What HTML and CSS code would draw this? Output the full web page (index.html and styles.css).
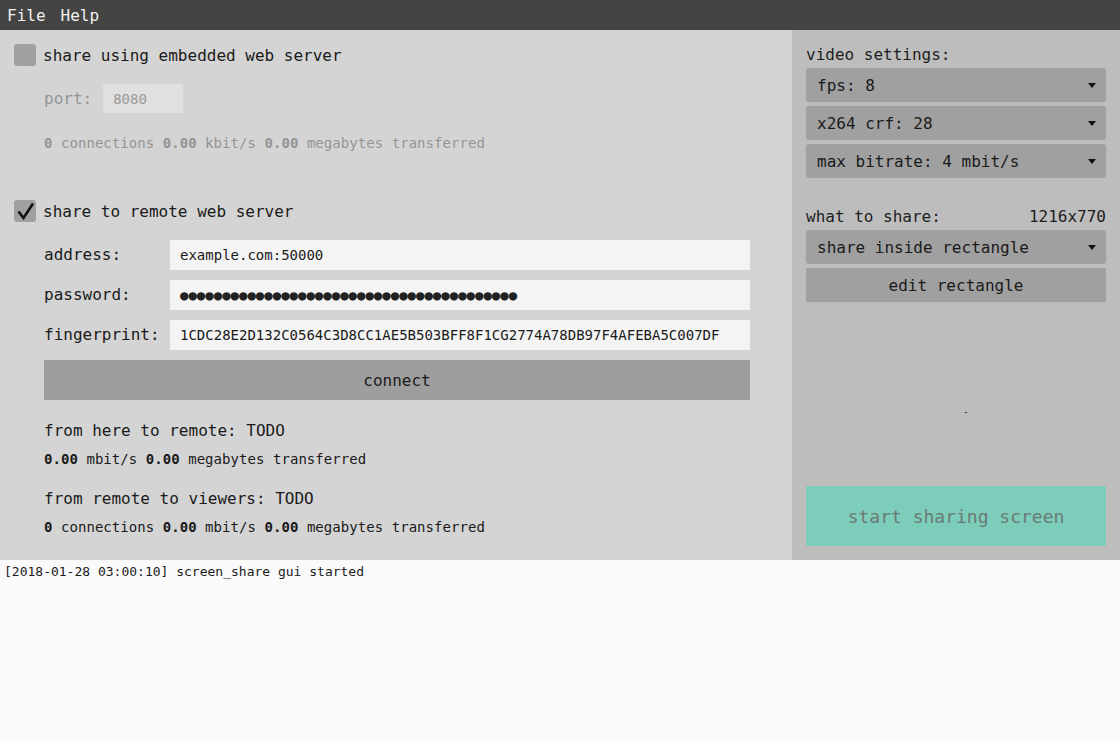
FILE: index.html
```html
<!DOCTYPE html>
<html>
<head>
<meta charset="utf-8">
<link rel="stylesheet" href="styles.css">
</head>
<body>
<div class="menubar">
  <span class="menu-item">File</span>
  <span class="menu-item">Help</span>
</div>
<div class="main">
  <div class="left">
    <div class="check-row">
      <span class="checkbox"></span>
      <span class="check-label">share using embedded web server</span>
    </div>
    <div class="sub">
      <div class="port-row">
        <span class="muted">port:</span>
        <span class="port-input">8080</span>
      </div>
      <div class="stats muted stats-embedded"><b>0</b> connections <b>0.00</b> kbit/s <b>0.00</b> megabytes transferred</div>
    </div>

    <div class="check-row check-remote">
      <span class="checkbox">
        <svg width="22" height="22" viewBox="0 0 22 22"><path d="M4.5 11.5 L9.5 18 L19 3.5" fill="none" stroke="#111" stroke-width="2.6" stroke-linejoin="miter"/></svg>
      </span>
      <span class="check-label">share to remote web server</span>
    </div>
    <div class="sub">
      <div class="field-row first">
        <span class="field-label">address:</span>
        <span class="field-input">example.com:50000</span>
      </div>
      <div class="field-row">
        <span class="field-label">password:</span>
        <span class="field-input dots">●●●●●●●●●●●●●●●●●●●●●●●●●●●●●●●●●●●●●●●●</span>
      </div>
      <div class="field-row">
        <span class="field-label">fingerprint:</span>
        <span class="field-input">1CDC28E2D132C0564C3D8CC1AE5B503BFF8F1CG2774A78DB97F4AFEBA5C007DF</span>
      </div>
      <div class="connect">connect</div>
      <div class="heading first-heading">from here to remote: TODO</div>
      <div class="stats"><b>0.00</b> mbit/s <b>0.00</b> megabytes transferred</div>
      <div class="heading second-heading">from remote to viewers: TODO</div>
      <div class="stats"><b>0</b> connections <b>0.00</b> mbit/s <b>0.00</b> megabytes transferred</div>
    </div>
  </div>
  <div class="right">
    <div class="section-label">video settings:</div>
    <div class="dropdown first-dd"><span>fps: 8</span><span class="caret"></span></div>
    <div class="dropdown"><span>x264 crf: 28</span><span class="caret"></span></div>
    <div class="dropdown"><span>max bitrate: 4 mbit/s</span><span class="caret"></span></div>
    <div class="section-label share-label"><span>what to share:</span><span>1216x770</span></div>
    <div class="dropdown first-dd"><span>share inside rectangle</span><span class="caret"></span></div>
    <div class="button-plain">edit rectangle</div>
    <div class="dot-wrap"><span class="dot"></span></div>
    <div class="start">start sharing screen</div>
  </div>
</div>
<div class="log">[2018-01-28 03:00:10] screen_share gui started</div>
</body>
</html>
```
FILE: styles.css
```css
html, body {
  margin: 0;
  padding: 0;
}
body {
  width: 1120px;
  height: 740px;
  overflow: hidden;
  font-family: "DejaVu Sans Mono", "Liberation Mono", monospace;
  color: #1a1a1a;
  background: #fafafa;
}
.menubar {
  height: 30px;
  background: #444444;
  display: flex;
  align-items: center;
  padding: 2px 0 0 7px;
  gap: 15px;
  box-sizing: border-box;
}
.menu-item {
  color: #f0f0f0;
  font-size: 16px;
  line-height: 28px;
}
.main {
  display: flex;
  height: 530px;
}
.left {
  width: 792px;
  background: #d4d4d4;
  padding: 14px 0 0 14px;
  box-sizing: border-box;
}
.check-row {
  display: flex;
  align-items: center;
  height: 22px;
  gap: 7px;
}
.check-remote {
  margin-top: 47px;
}
.checkbox {
  width: 22px;
  height: 22px;
  border-radius: 3px;
  background: #a0a0a0;
  display: block;
}
.checkbox svg {
  display: block;
}
.check-label {
  font-size: 16px;
  line-height: 22px;
  padding-top: 2px;
}
.sub {
  padding-left: 30px;
  width: 706px;
}
.muted {
  color: #959595;
}
.port-row {
  margin-top: 18px;
  display: flex;
  align-items: center;
  height: 29px;
  font-size: 16px;
}
.port-input {
  margin-left: 11px;
  width: 80px;
  height: 29px;
  line-height: 30px;
  background: #e0e0e0;
  color: #9a9a9a;
  font-size: 14px;
  padding-left: 10px;
  box-sizing: border-box;
}
.stats {
  font-size: 14px;
  line-height: 20px;
  letter-spacing: 0.05px;
  margin-top: 9px;
}
.stats-embedded {
  margin-top: 20px;
}
.field-row {
  display: flex;
  align-items: center;
  height: 30px;
  margin-top: 10px;
}
.field-row.first {
  margin-top: 18px;
}
.field-label {
  width: 126px;
  font-size: 16px;
  padding-bottom: 2px;
}
.field-input {
  flex: 1;
  height: 30px;
  line-height: 30px;
  background: #f4f4f4;
  font-size: 14px;
  padding-left: 10px;
  white-space: nowrap;
  overflow: hidden;
}
.dots {
  color: #222;
}
.connect {
  margin-top: 10px;
  height: 40px;
  line-height: 42px;
  overflow: hidden;
  background: #9e9e9e;
  text-align: center;
  font-size: 16px;
}
.heading {
  font-size: 16px;
  line-height: 19px;
  padding-top: 2px;
}
.first-heading {
  margin-top: 19px;
}
.second-heading {
  margin-top: 18px;
}
.right {
  flex: 1;
  background: #bdbdbd;
  padding: 15px 14px 14px 14px;
  display: flex;
  flex-direction: column;
}
.section-label {
  font-size: 16px;
  line-height: 20px;
  color: #1e1e1e;
}
.share-label {
  margin-top: 29px;
  display: flex;
  justify-content: space-between;
}
.dropdown {
  height: 34px;
  background: #a0a0a0;
  border-radius: 3px;
  margin-top: 4px;
  display: flex;
  align-items: center;
  justify-content: space-between;
  padding: 0 10px 0 11px;
  font-size: 16px;
}
.first-dd {
  margin-top: 3px;
}
.caret {
  width: 0;
  height: 0;
  border-left: 4px solid transparent;
  border-right: 4px solid transparent;
  border-top: 5px solid #111;
}
.button-plain {
  height: 34px;
  line-height: 36px;
  overflow: hidden;
  margin-top: 4px;
  background: #a0a0a0;
  text-align: center;
  font-size: 16px;
}
.dot-wrap {
  margin-top: 110px;
  height: 2px;
  padding-left: 159px;
}
.dot {
  display: block;
  width: 2px;
  height: 1px;
  background: #333;
}
.start {
  margin-top: auto;
  height: 60px;
  line-height: 62px;
  overflow: hidden;
  background: #7dcdbb;
  color: #6b7a75;
  text-align: center;
  font-size: 18px;
}
.log {
  height: 180px;
  background: #fafafa;
  font-size: 13px;
  line-height: 23px;
  padding-left: 4px;
  color: #1a1a1a;
}
```
